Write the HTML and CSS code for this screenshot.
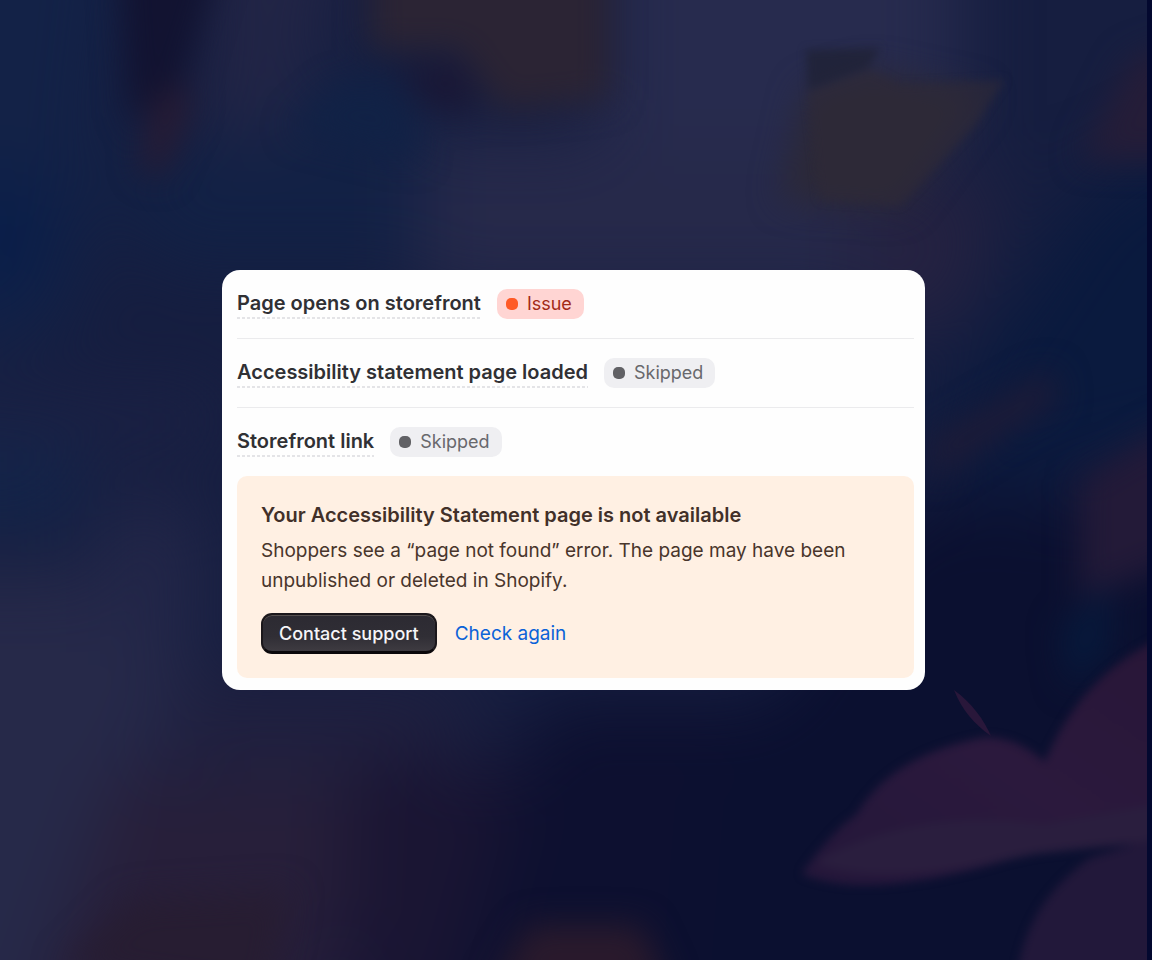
FILE: index.html
```
<!DOCTYPE html>
<html lang="en">
<head>
    <meta charset="UTF-8">
    <meta name="viewport" content="width=device-width, initial-scale=1.0">
    <title>Accessibility Statement Status</title>
    <link rel="stylesheet" href="styles.css">
</head>
<body>
    <main class="stage">
        <!-- Painted flower backdrop -->
        <svg class="backdrop" viewBox="0 0 1147 960" preserveAspectRatio="none" aria-hidden="true">
            <defs>
                <filter id="soft" x="-50%" y="-50%" width="200%" height="200%" color-interpolation-filters="sRGB"><feGaussianBlur stdDeviation="36"/></filter>
                <filter id="medium" x="-50%" y="-50%" width="200%" height="200%" color-interpolation-filters="sRGB"><feGaussianBlur stdDeviation="16"/></filter>
                <filter id="crisp" x="-20%" y="-20%" width="140%" height="140%" color-interpolation-filters="sRGB"><feGaussianBlur stdDeviation="4"/></filter>
                <linearGradient id="petal" x1="0" y1="1" x2="1" y2="0">
                    <stop offset="0" stop-color="#24173a"/>
                    <stop offset="0.5" stop-color="#2b193d"/>
                    <stop offset="1" stop-color="#281637"/>
                </linearGradient>
            </defs>
            <rect width="1147" height="960" fill="#161e40"/>
            <g filter="url(#soft)">
                <path d="M-100 -100H130L90 250L60 340L-100 370Z" fill="#132247"/>
                <path d="M250 70H430V270H160L100 180Z" fill="#122145"/>
                <path d="M-100 180H50V290H-100Z" fill="#091e49"/>
                <path d="M210 -100H360L300 130L200 150Z" fill="#222546"/>
                <path d="M420 130H860V300H420Z" fill="#26294a"/>
                <path d="M600 -100H960V150H600Z" fill="#272b4e"/>
                <path d="M-100 390H220V450H-100Z" fill="#1b2144"/>
                <path d="M-100 440H80V530H-100Z" fill="#132449"/>
                <path d="M-100 570H210L180 700L60 1060H-100Z" fill="#262949"/>
                <path d="M100 500H200V640H100Z" fill="#222648"/>
                <path d="M120 770H370L320 1060H20Z" fill="#271f3a"/>
                <path d="M180 680H500L400 780H180Z" fill="#20203f"/>
                <path d="M350 760H560V1060H340Z" fill="#1a1533"/>
                <path d="M540 700H980V1060H440Z" fill="#0d1030"/>
                <path d="M900 500H1250V1060H680L700 800Z" fill="#0b1030"/>
                <path d="M860 180H1000L960 330H860Z" fill="#252241"/>
                <path d="M1250 110L1090 190L930 430L970 500L1250 430Z" fill="#0a1a3e"/>
            </g>
            <g filter="url(#medium)">
                <path d="M120 -40H220L180 90L130 120Z" fill="#121331"/>
                <path d="M155 100L185 80L190 110L160 180L140 165Z" fill="#281b33"/>
                <path d="M370 -40H610V100L500 110L460 50H370Z" fill="#2b2434"/>
                <path d="M395 65L465 65L475 115L430 105Z" fill="#1a1735"/>
                <path d="M290 130L340 85L400 90L420 160Z" fill="#112246"/>
                <path d="M1180 420L1080 480L1080 600L1180 560Z" fill="#231a38"/>
                <path d="M1060 630L1110 580L1110 650L1070 690Z" fill="#07193b"/>
                <path d="M1130 60L1190 40V160H1080Z" fill="#251d38"/>
                <path d="M490 990L530 925H640L670 990Z" fill="#2a1a2c"/>
                <path d="M805 90L870 70L985 95L900 210L780 200Z" fill="#2c2938"/>
                <path d="M930 480L1060 400L1050 370L930 440Z" fill="#1e1b37"/>
                <path d="M60 970L130 900L290 890L270 1000Z" fill="#271d32"/>
            </g>
            <g filter="url(#crisp)">
                <path d="M806 50L880 48L868 68L808 90Z" fill="#1f2236" opacity="0.8"/>
                <path d="M808 92L870 70L900 85L1005 80L975 125L900 205L820 200Z" fill="#2e2a37" opacity="0.6"/>
                <path d="M1180 630C1100 660 1065 715 1045 762C1025 744 1005 737 985 737C920 750 880 775 856 815C835 828 808 864 802 874C850 895 930 885 1030 853L1180 840Z" fill="url(#petal)"/>
                <path d="M815 862C880 825 960 812 1045 824L1180 800V838L1035 854C960 870 870 885 815 862Z" fill="#2a1e3e"/>
                <path d="M1090 858L1180 830V990H1015C1020 930 1045 890 1090 858Z" fill="#22183a"/>
            </g>
            <path d="M954 690C972 703 984 720 991 736C974 724 962 710 954 690Z" fill="#29173a"/>
        </svg>

        <!-- Status card -->
        <section class="card">
            <div class="check-row">
                <span class="check-label">Page opens on storefront</span>
                <span class="badge badge-issue">Issue</span>
            </div>
            <div class="check-row">
                <span class="check-label">Accessibility statement page loaded</span>
                <span class="badge">Skipped</span>
            </div>
            <div class="check-row">
                <span class="check-label">Storefront link</span>
                <span class="badge">Skipped</span>
            </div>

            <div class="notice">
                <h2>Your Accessibility Statement page is not available</h2>
                <p>Shoppers see a “page not found” error. The page may have been unpublished or deleted in Shopify.</p>
                <div class="actions">
                    <button class="support-button" type="button">Contact support</button>
                    <a class="check-link" href="#">Check again</a>
                </div>
            </div>
        </section>
    </main>
</body>
</html>
```
FILE: styles.css
```
* {
    box-sizing: border-box;
}
body {
    margin: 0;
    font-family: Inter, "Liberation Sans", sans-serif;
    font-size: 19px;
    line-height: 30px;
    background-color: #03082f;
}
.stage {
    position: relative;
    display: flex;
    align-items: center;
    justify-content: center;
    min-height: 100vh;
    margin-right: 5px;
    overflow: hidden;
}
/* The artwork lies behind the card */
.backdrop {
    position: absolute;
    inset: 0;
    width: 100%;
    height: 100%;
}
.card {
    position: relative;
    width: 100%;
    max-width: 703px;
    padding: 0 11px 12px 15px;
    border-radius: 18px;
    background-color: #fefefe;
}
/* Check rows */
.check-row {
    display: flex;
    align-items: center;
    gap: 16px;
    padding: 19px 0;
    border-bottom: 1px solid #ebebed;
}
.check-row:nth-child(3) {
    border-bottom: none;
}
.check-label {
    padding-bottom: 2px;
    line-height: 28px;
    font-size: 20px;
    font-weight: 600;
    color: #303034;
    /* dotted underline */
    background: repeating-linear-gradient(to right, #e4e4e7 0 3px, transparent 3px 5px) left bottom / 100% 2px no-repeat;
}
.badge {
    display: flex;
    align-items: center;
    gap: 9px;
    padding: 0 12px 0 9px;
    border-radius: 10px;
    font-size: 18px;
    color: #68686c;
    background-color: #efeff2;
}
.badge::before {
    content: "";
    width: 12px;
    height: 12px;
    border-radius: 5px;
    background-color: #616165;
}
.badge-issue {
    color: #a32a17;
    background-color: #ffd5d3;
}
.badge-issue::before {
    background-color: #ff5a26;
}
/* Notice box */
.notice {
    padding: 24px;
    border-radius: 10px;
    color: #49352b;
    background-color: #fff0e3;
}
.notice h2 {
    margin: 0 0 6px;
    font-size: 20px;
    font-weight: 600;
    color: #423029;
}
.notice p {
    margin: 0 0 17px;
}
.actions {
    display: flex;
    align-items: center;
    gap: 18px;
}
.support-button {
    height: 41px;
    padding: 0 16px;
    border: 2px solid #1b171b;
    border-bottom: 3px solid #0b080b;
    border-radius: 11px;
    font-family: inherit;
    font-size: 18px;
    font-weight: 500;
    color: #f6f5f8;
    background: linear-gradient(#2c2a32, #302e35 60%, #3e3b41);
    box-shadow: inset 0 1px 0 #56504f;
    cursor: pointer;
}
.check-link {
    color: #0b62d8;
    text-decoration: none;
}
```
